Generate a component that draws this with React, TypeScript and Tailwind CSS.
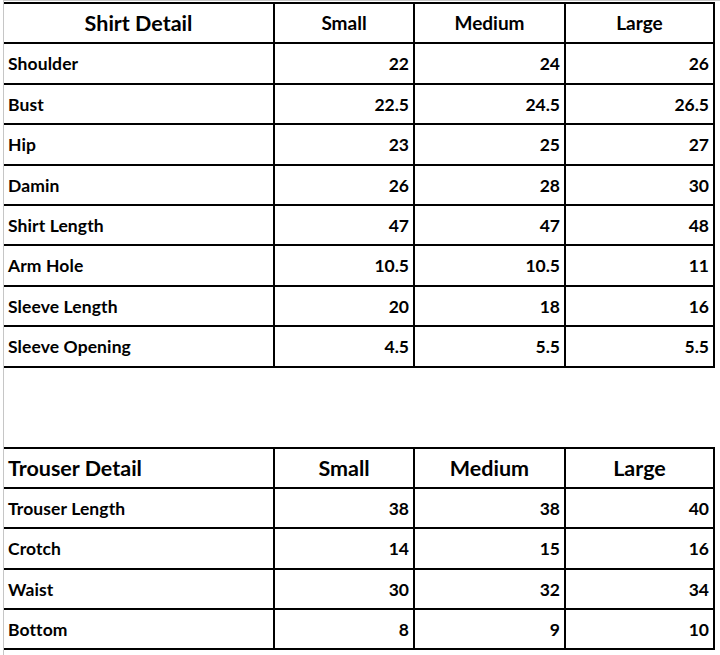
import React from "react";

type Row = { label: string; values: string[] };

const shirtRows: Row[] = [
  { label: "Shoulder", values: ["22", "24", "26"] },
  { label: "Bust", values: ["22.5", "24.5", "26.5"] },
  { label: "Hip", values: ["23", "25", "27"] },
  { label: "Damin", values: ["26", "28", "30"] },
  { label: "Shirt Length", values: ["47", "47", "48"] },
  { label: "Arm Hole", values: ["10.5", "10.5", "11"] },
  { label: "Sleeve Length", values: ["20", "18", "16"] },
  { label: "Sleeve Opening", values: ["4.5", "5.5", "5.5"] },
];

const trouserRows: Row[] = [
  { label: "Trouser Length", values: ["38", "38", "40"] },
  { label: "Crotch", values: ["14", "15", "16"] },
  { label: "Waist", values: ["30", "32", "34"] },
  { label: "Bottom", values: ["8", "9", "10"] },
];

const cell = "border-r-2 border-b-2 border-black flex items-center h-[40.4px]";

const SizeTable = ({
  title,
  rows,
  trouser,
}: {
  title: string;
  rows: Row[];
  trouser?: boolean;
}) => {
  return (
    <div className="grid grid-cols-[271px_140px_151px_149px] border-t-2 border-black w-[711px]">
      <div
        className={`${cell} ${
          trouser ? "justify-start pl-[4px] text-[21.5px]" : "justify-center text-[21.5px]"
        }`}
      >
        {title}
      </div>
      {["Small", "Medium", "Large"].map((s) => (
        <div
          key={s}
          className={`${cell} justify-center ${trouser ? "text-[21.5px]" : "text-[19px]"}`}
        >
          {s}
        </div>
      ))}
      {rows.map((r) => (
        <React.Fragment key={r.label}>
          <div className={`${cell} pl-[4px] pt-[2px] text-[17.5px] tracking-[0.1px]`}>{r.label}</div>
          {r.values.map((v, i) => (
            <div key={i} className={`${cell} justify-end pr-[4px] pt-[2px] text-[17.5px]`}>
              {v}
            </div>
          ))}
        </React.Fragment>
      ))}
    </div>
  );
};

export default function App() {
  return (
    <div className="w-[720px] h-[655px] bg-white overflow-hidden font-['Lato',sans-serif] font-bold text-black">
      <div className="ml-[3px] h-full border-l border-t border-[#c6c6c6] pt-[1px]">
        <SizeTable title="Shirt Detail" rows={shirtRows} />
        <div className="h-[79px]" />
        <SizeTable title="Trouser Detail" rows={trouserRows} trouser />
      </div>
    </div>
  );
}
